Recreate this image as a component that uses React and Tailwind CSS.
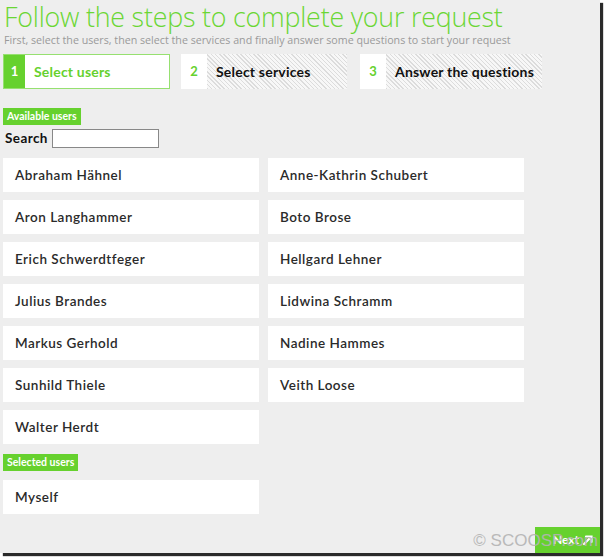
import React, { useState } from "react";

const available = [
  ["Abraham Hähnel", "Anne-Kathrin Schubert"],
  ["Aron Langhammer", "Boto Brose"],
  ["Erich Schwerdtfeger", "Hellgard Lehner"],
  ["Julius Brandes", "Lidwina Schramm"],
  ["Markus Gerhold", "Nadine Hammes"],
  ["Sunhild Thiele", "Veith Loose"],
  ["Walter Herdt", null],
];

const Step = ({ num, label, active, width }) => {
  if (active) {
    return (
      <div
        className="flex h-[35px] items-stretch border border-[#96e070] bg-white"
        style={{ width }}
      >
        <div className="flex w-[21px] items-center justify-center bg-[#66d12e] text-[13px] font-bold text-white">
          {num}
        </div>
        <div className="flex items-center pl-[9px] text-[14px] font-bold tracking-[0.2px] text-[#66d12e]">
          {label}
        </div>
      </div>
    );
  }
  return (
    <div className="flex h-[35px] items-stretch" style={{ width }}>
      <div className="flex w-[26px] items-center justify-center bg-white text-[13px] font-bold text-[#66d12e]">
        {num}
      </div>
      <div className="flex grow items-center bg-[repeating-linear-gradient(45deg,#dcdcdc_0px,#dcdcdc_1px,#f7f7f7_1px,#f7f7f7_3px)] pl-[9px] text-[14px] font-bold tracking-[0.2px] text-[#111]">
        {label}
      </div>
    </div>
  );
};

const UserCard = ({ name }) => (
  <div className="flex h-[34px] w-[256px] items-center bg-white pl-[12px] text-[13.5px] font-semibold tracking-[0.5px] text-[#2a2a2a]">
    {name}
  </div>
);

const Badge = ({ children }) => (
  <div className="flex pl-[3px]">
    <span className="bg-[#66d12e] px-[4px] text-[10.5px] font-bold leading-[17px] text-white">
      {children}
    </span>
  </div>
);

export default function App() {
  const [search, setSearch] = useState("");

  return (
    <div className="h-[557px] w-[604px] bg-white font-['Lato',sans-serif]">
      <div className="relative h-[553px] w-[600px] bg-[#eeeeee] shadow-[3px_3px_1px_#2a2a2a]">
        <div className="px-[4px] pt-[1px]">
          <h1 className="font-['Open_Sans',sans-serif] text-[26.8px] font-light leading-[32px] tracking-[-0.2px] text-[#6ad634]">
            Follow the steps to complete your request
          </h1>
          <p className="mt-[1px] whitespace-nowrap font-['Open_Sans',sans-serif] text-[10.7px] leading-[12px] text-[#9a9a9a]">
            First, select the users, then select the services and finally answer some questions to start your request
          </p>
        </div>

        <div className="mt-[8px] flex pl-[3px]">
          <Step num="1" label="Select users" active width={167} />
          <div className="w-[11px]" />
          <Step num="2" label="Select services" width={166} />
          <div className="w-[13px]" />
          <Step num="3" label="Answer the questions" width={182} />
        </div>

        <div className="mt-[19px]">
          <Badge>Available users</Badge>
        </div>
        <div className="mt-[3px] flex items-center pl-[5px]">
          <label
            htmlFor="search"
            className="mr-[4px] text-[13.5px] font-bold tracking-[0.4px] text-[#111]"
          >
            Search
          </label>
          <input
            id="search"
            value={search}
            onChange={(e) => setSearch(e.target.value)}
            className="h-[19px] w-[107px] border border-[#888] bg-white px-1 text-[12px]"
          />
        </div>

        <div className="mt-[10px] flex flex-col gap-[8px] pl-[3px]">
          {available.map(([a, b]) => (
            <div key={a} className="flex gap-[9px]">
              <UserCard name={a} />
              {b && <UserCard name={b} />}
            </div>
          ))}
        </div>

        <div className="mt-[10px]">
          <Badge>Selected users</Badge>
        </div>
        <div className="mt-[9px] pl-[3px]">
          <UserCard name="Myself" />
        </div>

        <button className="absolute bottom-0 right-0 flex h-[26px] w-[65px] items-center justify-end gap-[3px] bg-[#66d12e] pr-[6px] text-[12px] font-bold text-white">
          Next
          <svg width="12" height="12" viewBox="0 0 12 12" fill="none">
            <path
              d="M2 10 L9 3 M4 2.5 H9.5 V8"
              stroke="white"
              strokeWidth="2.2"
              strokeLinecap="round"
            />
          </svg>
        </button>
        <div className="pointer-events-none absolute bottom-[2px] right-[2px] font-['Liberation_Sans',sans-serif] text-[17px] leading-[20px] text-[#b4b4b4] opacity-90">
          © SCOOSP.com
        </div>
      </div>
    </div>
  );
}
